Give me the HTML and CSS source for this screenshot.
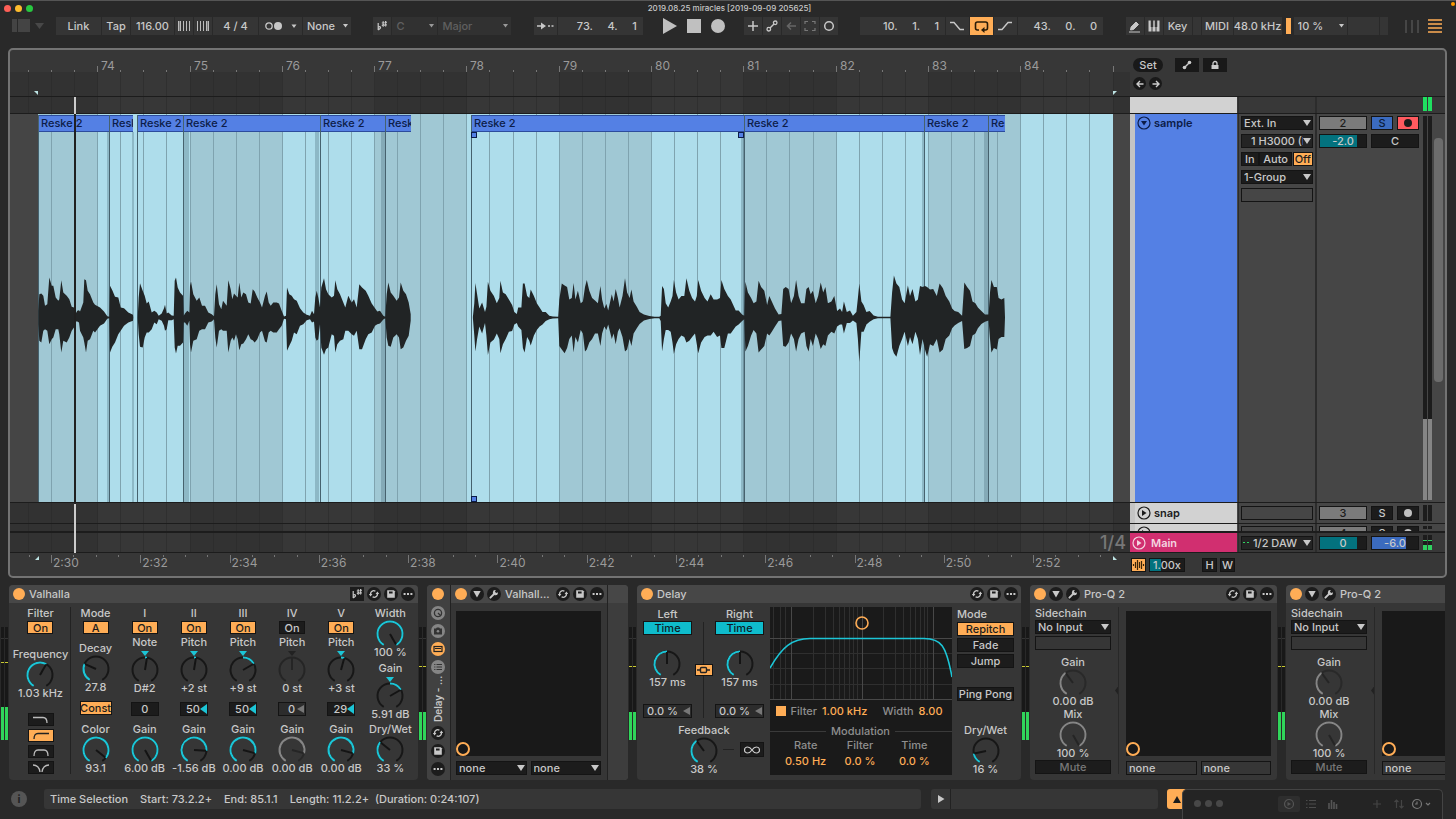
FILE: index.html
```html
<!DOCTYPE html>
<html lang="en">
<head>
    <meta charset="UTF-8">
    <title>2019.08.25 miracles</title>
    <link rel="stylesheet" href="styles.css">
</head>
<body>
    <svg class="symbols" aria-hidden="true">
        <symbol id="i-swap" viewBox="0 0 14 14"><path d="M3.6 7.6V6.8A3 3 0 0 1 8.4 4.3M10.4 6.4v.8A3 3 0 0 1 5.6 9.7" fill="none" stroke="currentColor" stroke-width="1.4"/><path d="M1.8 7h3.6L3.6 9.4zM8.6 7h3.6l-1.8-2.4z" fill="currentColor"/></symbol>
        <symbol id="i-save" viewBox="0 0 14 14"><path d="M3.2 3.2h6.600l1 1v6.600H3.200z" fill="currentColor"/><path d="M5 4.5h3.6v2H5z" fill="#1c1c1c"/></symbol>
        <symbol id="i-dots" viewBox="0 0 14 14"><path d="M2.6 6h2v2h-2zM6 6h2v2H6zM9.400 6h2v2h-2z" fill="currentColor"/></symbol>
        <symbol id="i-down" viewBox="0 0 14 14"><path d="M3.3 4h7.4L7 10.6z" fill="currentColor"/></symbol>
        <symbol id="i-wrench" viewBox="0 0 14 14"><path d="M3.4 10.6l4-4" stroke="currentColor" stroke-width="2" stroke-linecap="round"/><path d="M10.8 5.2a2.5 2.5 0 1 1-2-2L7.9 4.7l1.4 1.4z" fill="currentColor"/></symbol>
        <symbol id="i-scale" viewBox="0 0 14 14"><path d="M3.2 4v7M3.2 8.2c2-1.4 3 .2 1.8 1.3L3.2 11M8.2 2.3v5.4M10.6 2v5.4M6.8 4l5-.6M6.8 6.4l5-.6" fill="none" stroke="currentColor" stroke-width="1.200"/></symbol>
        <symbol id="i-macro" viewBox="0 0 14 14"><circle cx="7" cy="7" r="3.6" fill="none" stroke="#333" stroke-width="1.3"/><path d="M7 7l3 3" stroke="#333" stroke-width="1.3"/></symbol>
        <symbol id="i-camera" viewBox="0 0 14 14"><path d="M3 4.5h2l.8-1h2.4l.8 1h2v6H3z" fill="#333"/><circle cx="7" cy="7.3" r="1.3" fill="#888"/></symbol>
        <symbol id="i-device" viewBox="0 0 14 14"><rect x="3" y="4.5" width="8" height="5" fill="none" stroke="#222" stroke-width="1.2"/><path d="M4 6.5h6" stroke="#222"/></symbol>
        <symbol id="i-list" viewBox="0 0 14 14"><path d="M3.2 4.5h1.2M3.2 7h1.2M3.2 9.5h1.2M5.5 4.5H11M5.5 7H11M5.5 9.5H11" stroke="#333" stroke-width="1.2"/></symbol>
    </svg>

    <header class="title-bar">
        <span class="lights"><i class="close"></i><i class="minimise"></i><i class="zoom"></i></span>
        <h1>2019.08.25 miracles [2019-09-09 205625]</h1>
        <i class="mic-dot"></i>
    </header>

    <nav class="toolbar">
        <div class="group">
            <button class="bare panel-toggle" aria-label="Browser"><svg width="30" height="14"><path d="M0 0h5v13H0zM6 0h12v13H6z" fill="#444"/><path d="M23 4h9l-4.500 6z" fill="#484848"/></svg></button>
            <button class="tb w45">Link</button>
            <button class="tb w28">Tap</button>
            <input class="tb w43" aria-label="Tempo" value="116.00">
            <button class="tb w18" aria-label="Nudge down"><svg width="14" height="12"><path d="M1.500 1v10M3.500 1v10M6.500 1v10M9.500 1v10M12.500 1v10" stroke="#bbb"/><path d="M1 6h3" stroke="#bbb" stroke-width="10" opacity=".5"/></svg></button>
            <button class="tb w18" aria-label="Nudge up"><svg width="14" height="12"><path d="M1.500 1v10M4.500 1v10M7.500 1v10M10.500 1v10M12.500 1v10" stroke="#bbb"/><path d="M10 6h3" stroke="#bbb" stroke-width="10" opacity=".5"/></svg></button>
            <input class="tb w45" aria-label="Time signature" value="4 / 4">
            <button class="tb w43" aria-label="Metronome"><svg width="34" height="12"><circle cx="5" cy="6" r="3.200" fill="none" stroke="#c8c8c8" stroke-width="1.300"/><circle cx="14" cy="6" r="4" fill="#c8c8c8"/><path d="M27.500 4.500h5L30 8z" fill="#c8c8c8"/></svg></button>
            <select class="tb w48 small-arrow" aria-label="Quantisation"><option>None</option></select>
        </div>
        <div class="group">
            <button class="tb w18" aria-label="Scale mode"><svg class="icon"><use href="#i-scale"/></svg></button>
            <select class="tb w45 small-arrow dim" aria-label="Root note"><option>C</option></select>
            <select class="tb w73 small-arrow dim" aria-label="Scale"><option>Major</option></select>
        </div>
        <div class="group">
            <button class="tb w23" aria-label="Follow"><svg width="18" height="10"><path d="M1 5h5M12 5h2M15.500 5h2" stroke="#c8c8c8" stroke-width="1.500"/><path d="M5 1.500L10 5 5 8.500z" fill="#c8c8c8"/></svg></button>
            <input class="tb w85 position" aria-label="Arrangement position" value="73.     4.     1">
            <div class="transport">
                <button class="bare" aria-label="Play"><svg width="14" height="16"><path d="M0 0l14 8-14 8z" fill="#c0c0c0"/></svg></button>
                <button class="bare" aria-label="Stop"><svg width="14" height="14"><path d="M0 0h14v14H0z" fill="#c0c0c0"/></svg></button>
                <button class="bare" aria-label="Record"><svg width="14" height="14"><circle cx="7" cy="7" r="7" fill="#c0c0c0"/></svg></button>
            </div>
            <button class="tb w18" aria-label="Overdub"><svg width="12" height="12"><path d="M6 1v10M1 6h10" stroke="#c8c8c8" stroke-width="1.500"/></svg></button>
            <button class="tb w18" aria-label="Automation arm"><svg width="12" height="12"><path d="M4 8l4-4" stroke="#c8c8c8" stroke-width="1.400"/><circle cx="2.800" cy="9.200" r="1.800" fill="none" stroke="#c8c8c8" stroke-width="1.300"/><circle cx="9.200" cy="2.800" r="1.800" fill="none" stroke="#c8c8c8" stroke-width="1.300"/></svg></button>
            <button class="tb w18" aria-label="Re-enable automation"><svg width="12" height="12"><path d="M11 6H3M6 2.500L2.500 6 6 9.500" fill="none" stroke="#666" stroke-width="1.600"/></svg></button>
            <button class="tb w18" aria-label="Capture MIDI"><svg width="12" height="12"><path d="M1 4V1.500h3M8 1.500h3V4M11 8v2.500H8M4 10.500H1V8" fill="none" stroke="#777" stroke-width="1.200"/></svg></button>
            <button class="tb w18" aria-label="Session record"><svg width="12" height="12"><circle cx="6" cy="6" r="4.300" fill="none" stroke="#c8c8c8" stroke-width="1.500"/></svg></button>
        </div>
        <div class="group">
            <input class="tb w85 position" aria-label="Loop start" value="10.     1.     1">
            <button class="tb w23" aria-label="Punch in"><svg width="15" height="10"><path d="M0 1.500h4l6 7h4" fill="none" stroke="#c8c8c8" stroke-width="1.400"/></svg></button>
            <button class="tb w23 on" aria-label="Loop"><svg width="16" height="13"><path d="M5 10H3.500Q1.500 10 1.500 8V4Q1.500 2 3.500 2h8Q13.500 2 13.500 4v4Q13.500 10 11.500 10H9" fill="none" stroke="#2a1c08" stroke-width="1.600"/><path d="M10.500 7v6L7 10z" fill="#2a1c08"/></svg></button>
            <button class="tb w23" aria-label="Punch out"><svg width="15" height="10"><path d="M0 8.500h4l6-7h4" fill="none" stroke="#c8c8c8" stroke-width="1.400"/></svg></button>
            <input class="tb w85 position" aria-label="Loop length" value="43.     0.     0">
        </div>
        <div class="group">
            <button class="tb w18" aria-label="Draw mode"><svg width="13" height="13"><path d="M2.500 10l.6-3L8 2l2.500 2.500-5 5zM1 12h11" fill="#c8c8c8" stroke="#c8c8c8"/></svg></button>
            <button class="tb w18" aria-label="Computer MIDI keyboard"><svg width="12" height="12"><path d="M.5.5h11v11H.5z" fill="#c8c8c8"/><path d="M4 0v12M8 0v12" stroke="#353535"/><path d="M4 0v7M8 0v7" stroke="#353535" stroke-width="2.500"/></svg></button>
            <button class="tb w28">Key</button>
            <span class="tb w8"></span>
            <button class="tb w30">MIDI</button>
            <button class="tb w48">48.0 kHz</button>
            <i class="cpu-bar"></i>
            <select class="tb w53 small-arrow" aria-label="CPU load"><option>10 %</option></select>
            <span class="tb w30"></span>
            <span class="tb w8"></span>
        </div>
        <div class="group views">
            <button class="bare" aria-label="Session view"><svg width="14" height="13"><path d="M1 0v13M7 0v13M13 0v13" stroke="#505050" stroke-width="1.500"/></svg></button>
            <button class="bare" aria-label="Arrangement view"><svg width="14" height="14"><path d="M0 1h14M0 5h14M0 9h14M0 13h14" stroke="#ffad56" stroke-width="1.700"/></svg></button>
        </div>
    </nav>

    <main class="arrangement">
        <section class="timeline">
            <div class="ruler bar-ruler"><div class="grid"></div><div class="labels"></div></div>
            <div class="lane overview"><div class="grid"></div></div>
            <div class="lane track-lane">
                <div class="selection"></div>
                <div class="clips"></div>
                <svg class="waveform" viewBox="0 0 1120 370" preserveAspectRatio="none"><path/></svg>
            </div>
            <div class="lane snap-lane"><div class="grid"></div></div>
            <div class="lane cut-lane"><div class="grid"></div></div>
            <div class="lane main-lane"><div class="grid"></div><span class="grid-size">1/4</span></div>
            <div class="ruler time-ruler"><div class="labels"></div></div>
            <div class="playhead"></div>
        </section>

        <section class="tracks">
            <div class="track-tools">
                <div class="tool-row">
                    <button class="pill">Set</button>
                    <button class="tool" aria-label="Automation"><svg width="10" height="10"><path d="M2 8l6-6" stroke="#ccc" stroke-width="1.500"/><circle cx="2.500" cy="7.500" r="1.800" fill="#ccc"/><circle cx="7.500" cy="2.500" r="1.800" fill="#ccc"/></svg></button>
                    <button class="tool" aria-label="Lock envelopes"><svg width="10" height="10"><path d="M1.500 5h7v4h-7z" fill="#ccc"/><path d="M3 5V3.500a2 2 0 0 1 4 0V5" fill="none" stroke="#ccc" stroke-width="1.300"/></svg></button>
                </div>
                <div class="tool-row arrows">
                    <button class="round" aria-label="Previous locator"><svg width="8" height="8"><path d="M7.500 4h-6M4 1L1 4l3 3" fill="none" stroke="#ccc" stroke-width="1.400"/></svg></button>
                    <button class="round" aria-label="Next locator"><svg width="8" height="8"><path d="M.5 4h6M4 1l3 3-3 3" fill="none" stroke="#ccc" stroke-width="1.400"/></svg></button>
                </div>
            </div>
            <div class="track overview">
                <div class="name light"></div>
                <div class="io"></div>
                <div class="mixer"></div>
                <div class="level clip-level"><i></i><i></i></div>
            </div>
            <div class="track sample">
                <div class="name blue"><svg class="fold" viewBox="0 0 14 14"><circle cx="7" cy="7" r="6" fill="none" stroke="currentColor" stroke-width="1.200"/><path d="M4 5h6L7 9.500z" fill="currentColor"/></svg>sample</div>
                <div class="io">
                    <select class="box" aria-label="Input type"><option>Ext. In</option></select>
                    <select class="box channel" aria-label="Input channel"><option>1 H3000 (L)</option></select>
                    <div class="monitor"><button class="box">In</button><button class="box">Auto</button><button class="box on">Off</button></div>
                    <select class="box" aria-label="Output type"><option>1-Group</option></select>
                    <div class="box empty"></div>
                </div>
                <div class="mixer">
                    <button class="box number wide">2</button><button class="box solo">S</button><button class="box arm" aria-label="Arm"><i class="dot"></i></button>
                    <input class="box wide volume" aria-label="Volume" value="-2.0"><input class="box wide" aria-label="Pan" value="C">
                </div>
                <div class="level"><i></i><i></i></div>
                <div class="scrollbar"></div>
            </div>
            <div class="track snap">
                <div class="name light"><svg class="fold" viewBox="0 0 14 14"><circle cx="7" cy="7" r="6" fill="none" stroke="currentColor" stroke-width="1.200"/><path d="M5 4v6l4.500-3z" fill="currentColor"/></svg>snap</div>
                <div class="io"><div class="box empty"></div></div>
                <div class="mixer"><button class="box number wide">3</button><button class="box">S</button><button class="box" aria-label="Arm"><i class="dot grey"></i></button></div>
                <div class="level"><i></i><i></i></div>
            </div>
            <div class="track cut">
                <div class="name light"><svg class="fold" viewBox="0 0 14 14"><circle cx="7" cy="7" r="6" fill="none" stroke="currentColor" stroke-width="1.200"/><path d="M5 4v6l4.500-3z" fill="currentColor"/></svg>snap</div>
                <div class="io"><div class="box empty"></div></div>
                <div class="mixer"><button class="box number wide">4</button><button class="box">S</button><button class="box" aria-label="Arm"><i class="dot grey"></i></button></div>
                <div class="level"><i></i><i></i></div>
            </div>
            <div class="track main">
                <div class="name pink"><svg class="fold" viewBox="0 0 14 14"><circle cx="7" cy="7" r="6" fill="none" stroke="currentColor" stroke-width="1.200"/><path d="M5 4v6l4.500-3z" fill="currentColor"/></svg>Main</div>
                <div class="io"><select class="box output" aria-label="Main output"><option>1/2 DAW</option></select></div>
                <div class="mixer"><input class="box wide volume" aria-label="Main volume" value="0"><input class="box wide cue" aria-label="Cue volume" value="-6.0"></div>
                <div class="level main-level"><i></i><i></i></div>
            </div>
            <div class="track-foot">
                <button class="box on wave" aria-label="Optimise height"><svg width="13" height="12"><path d="M1.500 5v2M3.500 3v6M5.500 1v10M7.500 3v6M9.500 2v8M11.500 5v2" stroke="#3a2408" stroke-width="1.200"/></svg></button>
                <input class="box speed" aria-label="Playback speed" value="1.00x">
                <button class="box h">H</button>
                <button class="box">W</button>
            </div>
        </section>
    </main>

    <section class="chain">
        <div class="meter left-meter"></div>

        <article class="device valhalla">
            <header><button class="power" aria-label="Valhalla on"></button><h2>Valhalla</h2>
                <button class="chip square" aria-label="Scale"><svg class="icon"><use href="#i-scale"/></svg></button>
                <button class="chip" aria-label="Swap"><svg class="icon"><use href="#i-swap"/></svg></button>
                <button class="chip" aria-label="Save"><svg class="icon"><use href="#i-save"/></svg></button>
                <button class="chip" aria-label="More"><svg class="icon"><use href="#i-dots"/></svg></button>
            </header>
            <div class="body">
                <div class="col filter-col">
                    <div class="stack"><span>Filter</span><button class="box on w26">On</button></div>
                    <label class="knob"><span>Frequency</span><input type="range" value="60"><b>1.03 kHz</b></label>
                    <div class="stack shapes">
                        <button class="box w26" aria-label="Low-pass"><svg width="16" height="8"><path d="M0 1.500h10q4 0 4 5.500" fill="none" stroke="#bbb" stroke-width="1.300"/></svg></button>
                        <button class="box on w26" aria-label="High-pass"><svg width="16" height="8"><path d="M1 7q0-5.500 4-5.500h11" fill="none" stroke="#222" stroke-width="1.300"/></svg></button>
                        <button class="box w26" aria-label="Band-pass"><svg width="16" height="8"><path d="M1 8q0-6 4-6h6q4 0 4 6" fill="none" stroke="#bbb" stroke-width="1.300"/></svg></button>
                        <button class="box w26" aria-label="Notch"><svg width="16" height="8"><path d="M0 1q6 0 7 7M16 1q-6 0-7 7" fill="none" stroke="#bbb" stroke-width="1.300"/></svg></button>
                    </div>
                </div>
                <div class="col">
                    <div class="stack"><span>Mode</span><button class="box on w26">A</button></div>
                    <label class="knob"><span>Decay</span><input type="range" value="28"><b>27.8</b></label>
                    <button class="box on w32">Const</button>
                    <label class="knob"><span>Color</span><input type="range" value="93"><b>93.1</b></label>
                </div>
                <div class="col">
                    <div class="stack"><span>I</span><button class="box on w26">On</button>
                        <label class="knob bipolar"><span>Note</span><input type="range" value="53"><b>D#2</b></label></div>
                    <input class="box w28 amount" aria-label="Fine I" value="0">
                    <label class="knob"><span>Gain</span><input type="range" value="100"><b>6.00 dB</b></label>
                </div>
                <div class="col">
                    <div class="stack"><span>II</span><button class="box on w26">On</button>
                        <label class="knob bipolar"><span>Pitch</span><input type="range" value="53"><b>+2 st</b></label></div>
                    <input class="box w28 amount mod" aria-label="Fine II" value="50">
                    <label class="knob"><span>Gain</span><input type="range" value="81"><b>-1.56 dB</b></label>
                </div>
                <div class="col">
                    <div class="stack"><span>III</span><button class="box on w26">On</button>
                        <label class="knob bipolar"><span>Pitch</span><input type="range" value="70"><b>+9 st</b></label></div>
                    <input class="box w28 amount mod" aria-label="Fine III" value="50">
                    <label class="knob"><span>Gain</span><input type="range" value="85"><b>0.00 dB</b></label>
                </div>
                <div class="col">
                    <div class="stack"><span>IV</span><button class="box w26">On</button>
                        <label class="knob bipolar faint"><span>Pitch</span><input type="range" value="50"><b>0 st</b></label></div>
                    <input class="box w28 amount mod inactive" aria-label="Fine IV" value="0">
                    <label class="knob grey"><span>Gain</span><input type="range" value="85"><b>0.00 dB</b></label>
                </div>
                <div class="col">
                    <div class="stack"><span>V</span><button class="box on w26">On</button>
                        <label class="knob bipolar"><span>Pitch</span><input type="range" value="55"><b>+3 st</b></label></div>
                    <input class="box w28 amount mod" aria-label="Fine V" value="29">
                    <label class="knob"><span>Gain</span><input type="range" value="85"><b>0.00 dB</b></label>
                </div>
                <div class="col">
                    <label class="knob"><span>Width</span><input type="range" value="100"><b>100 %</b></label>
                    <label class="knob bipolar"><span>Gain</span><input type="range" value="70"><b>5.91 dB</b></label>
                    <label class="knob"><span>Dry/Wet</span><input type="range" value="33"><b>33 %</b></label>
                </div>
            </div>
        </article>

        <div class="meter"></div>

        <article class="device rack">
            <div class="rack-strip">
                <button class="power" aria-label="Rack on"></button>
                <button class="chip pale" aria-label="Macros"><svg class="icon"><use href="#i-macro"/></svg></button>
                <button class="chip pale" aria-label="Variations"><svg class="icon"><use href="#i-camera"/></svg></button>
                <button class="chip lit" aria-label="Devices"><svg class="icon"><use href="#i-device"/></svg></button>
                <button class="chip pale" aria-label="Chains"><svg class="icon"><use href="#i-list"/></svg></button>
                <h2>Delay - ...</h2>
                <button class="chip" aria-label="Swap"><svg class="icon"><use href="#i-swap"/></svg></button>
                <button class="chip" aria-label="Save"><svg class="icon"><use href="#i-save"/></svg></button>
                <button class="chip" aria-label="More"><svg class="icon"><use href="#i-dots"/></svg></button>
            </div>
            <div class="rack-main">
                <header><button class="power" aria-label="Plug-in on"></button>
                    <button class="chip" aria-label="Unfold"><svg class="icon"><use href="#i-down"/></svg></button>
                    <button class="chip" aria-label="Plug-in window"><svg class="icon"><use href="#i-wrench"/></svg></button>
                    <h2>Valhall...</h2>
                    <button class="chip" aria-label="Swap"><svg class="icon"><use href="#i-swap"/></svg></button>
                    <button class="chip" aria-label="Save"><svg class="icon"><use href="#i-save"/></svg></button>
                    <button class="chip" aria-label="More"><svg class="icon"><use href="#i-dots"/></svg></button>
                </header>
                <div class="xy-wrap">
                    <div class="xy"><i class="ring"></i></div>
                    <div class="xy-selects">
                        <select class="box" aria-label="X parameter"><option>none</option></select>
                        <select class="box" aria-label="Y parameter"><option>none</option></select>
                    </div>
                </div>
            </div>
            <div class="rack-end"></div>
        </article>

        <div class="meter"></div>

        <article class="device delay">
            <header><button class="power" aria-label="Delay on"></button><h2>Delay</h2>
                <button class="chip" aria-label="Swap"><svg class="icon"><use href="#i-swap"/></svg></button>
                <button class="chip" aria-label="Save"><svg class="icon"><use href="#i-save"/></svg></button>
                <button class="chip" aria-label="More"><svg class="icon"><use href="#i-dots"/></svg></button>
            </header>
            <div class="body">
                <div class="times">
                    <div class="channels">
                        <div class="side">
                            <span>Left</span><button class="box cyan">Time</button>
                            <label class="knob"><span class="hidden">Left time</span><input type="range" value="50"><b>157 ms</b></label>
                            <input class="box offset" aria-label="Left offset" value="0.0 %">
                        </div>
                        <div class="link-line"><button class="box on" aria-label="Link"><svg width="13" height="8"><path d="M0 4h4M9 4h4" stroke="#222" stroke-width="1.300"/><rect x="3.500" y="1.500" width="6" height="5" rx="1" fill="none" stroke="#222" stroke-width="1.400"/></svg></button></div>
                        <div class="side">
                            <span>Right</span><button class="box cyan">Time</button>
                            <label class="knob"><span class="hidden">Right time</span><input type="range" value="50"><b>157 ms</b></label>
                            <input class="box offset" aria-label="Right offset" value="0.0 %">
                        </div>
                    </div>
                    <div class="feedback">
                        <label class="knob"><span>Feedback</span><input type="range" value="38"><b>38 %</b></label>
                        <i class="dash"></i>
                        <button class="box freeze" aria-label="Freeze"><svg width="16" height="8"><path d="M8 4C6 1 4.500 1 3.500 1a3 3 0 0 0 0 6C4.500 7 6 7 8 4s3.500-3 4.500-3a3 3 0 0 1 0 6C11.500 7 10 7 8 4z" fill="none" stroke="#ccc" stroke-width="1.200"/></svg></button>
                    </div>
                </div>
                <div class="display">
                    <svg class="curve" viewBox="0 0 182 94" preserveAspectRatio="none">
                        <path d="M3.500 0v93M10.500 0v93M15.500 0v93M43.500 0v93M55.500 0v93M63.500 0v93M69.500 0v93M74.500 0v93M79.500 0v93M83.500 0v93M87.500 0v93M113.500 0v93M125.500 0v93M133.500 0v93M140.500 0v93M145.500 0v93M150.500 0v93M154.500 0v93M157.500 0v93M0 46.500h182M0 61.500h182M0 77.500h182" stroke="#2f2f2f"/>
                        <path d="M21.500 0v93M92.500 0v93M163.500 0v93M0 31.500h182M0 92.500h182" stroke="#484848"/>
                        <path d="M0 61C12 40 22 31.500 40 31.500H154C171 31.500 176 38 182 70" fill="none" stroke="#1cc5d6" stroke-width="1.600"/>
                        <circle cx="92" cy="16" r="6" fill="none" stroke="#ffad56" stroke-width="1.600"/>
                    </svg>
                    <div class="readout"><label><input type="checkbox" checked> Filter</label><b>1.00 kHz</b><span class="push">Width</span><b>8.00</b></div>
                    <div class="rule"><span>Modulation</span></div>
                    <dl><div><dt>Rate</dt><dd>0.50 Hz</dd></div><div><dt>Filter</dt><dd>0.0 %</dd></div><div><dt>Time</dt><dd>0.0 %</dd></div></dl>
                </div>
                <div class="modes">
                    <span>Mode</span>
                    <button class="box on">Repitch</button>
                    <button class="box">Fade</button>
                    <button class="box">Jump</button>
                    <button class="box ping">Ping Pong</button>
                    <label class="knob"><span>Dry/Wet</span><input type="range" value="16"><b>16 %</b></label>
                </div>
            </div>
        </article>

        <div class="meter"></div>

        <article class="device proq">
            <header><button class="power" aria-label="Pro-Q 2 on"></button>
                <button class="chip" aria-label="Unfold"><svg class="icon"><use href="#i-down"/></svg></button>
                <button class="chip" aria-label="Plug-in window"><svg class="icon"><use href="#i-wrench"/></svg></button>
                <h2>Pro-Q 2</h2>
                <button class="chip" aria-label="Swap"><svg class="icon"><use href="#i-swap"/></svg></button>
                <button class="chip" aria-label="Save"><svg class="icon"><use href="#i-save"/></svg></button>
                <button class="chip" aria-label="More"><svg class="icon"><use href="#i-dots"/></svg></button>
            </header>
            <div class="body">
                <div class="sidechain">
                    <label for="sc1">Sidechain</label>
                    <select class="box" id="sc1"><option>No Input</option></select>
                    <div class="box empty"></div>
                    <label class="knob grey"><span>Gain</span><input type="range" value="38"><b>0.00 dB</b></label>
                    <label class="knob grey"><span>Mix</span><input type="range" value="100"><b>100 %</b></label>
                    <button class="box mute">Mute</button>
                </div>
                <div class="splitter"><i></i></div>
                <div class="xy-wrap">
                    <div class="xy"><i class="ring"></i></div>
                    <div class="xy-selects"><button class="box empty">none</button><button class="box empty">none</button></div>
                </div>
            </div>
        </article>

        <div class="meter"></div>

        <article class="device proq">
            <header><button class="power" aria-label="Pro-Q 2 on"></button>
                <button class="chip" aria-label="Unfold"><svg class="icon"><use href="#i-down"/></svg></button>
                <button class="chip" aria-label="Plug-in window"><svg class="icon"><use href="#i-wrench"/></svg></button>
                <h2>Pro-Q 2</h2>
            </header>
            <div class="body">
                <div class="sidechain">
                    <label for="sc2">Sidechain</label>
                    <select class="box" id="sc2"><option>No Input</option></select>
                    <div class="box empty"></div>
                    <label class="knob grey"><span>Gain</span><input type="range" value="38"><b>0.00 dB</b></label>
                    <label class="knob grey"><span>Mix</span><input type="range" value="100"><b>100 %</b></label>
                    <button class="box mute">Mute</button>
                </div>
                <div class="splitter"><i></i></div>
                <div class="xy-wrap">
                    <div class="xy"><i class="ring"></i></div>
                    <div class="xy-selects"><button class="box empty">none</button><button class="box empty"></button></div>
                </div>
            </div>
        </article>
    </section>

    <footer class="status-bar">
        <button class="info" aria-label="Info view">i</button>
        <p class="status-text"><span>Time Selection</span><span>Start: 73.2.2+</span><span>End: 85.1.1</span><span>Length: 11.2.2+&nbsp; (Duration: 0:24:107)</span></p>
        <div class="status-clip"><button class="bare" aria-label="Show clip view"><svg width="8" height="8"><path d="M1 0l6.500 4L1 8z" fill="#c8c8c8"/></svg></button></div>
        <button class="status-up" aria-label="Show device view"><svg width="8" height="7"><path d="M4 0l4 7H0z" fill="#1c1c1c"/></svg></button>
    </footer>

    <aside class="mini-window">
        <span class="mini-lights"><i></i><i></i><i></i></span>
        <button class="mini active" aria-label="Live"><svg width="12" height="12"><circle cx="6" cy="6" r="4.500" fill="none" stroke="#555" stroke-width="1.200"/><path d="M4.500 4l3.500 2-3.500 2z" fill="#555"/></svg></button>
        <button class="mini" aria-label="List"><svg width="12" height="12"><path d="M1 2.500h1.500M1 6h1.500M1 9.500h1.500M4 2.500h7M4 6h7M4 9.500h7" stroke="#4c4c4c" stroke-width="1.200"/></svg></button>
        <button class="mini" aria-label="Levels"><svg width="12" height="12"><path d="M2 5v6M4.500 2v9M7 4v7M9.500 6v5" stroke="#555" stroke-width="1.600"/></svg></button>
        <button class="mini push" aria-label="Add"><svg width="12" height="12"><path d="M6 2v8M2 6h8" stroke="#444" stroke-width="1.200"/></svg></button>
        <button class="mini" aria-label="Sort"><svg width="12" height="12"><path d="M3.500 10V2M1.500 4l2-2 2 2M8.500 2v8M6.500 8l2 2 2-2" fill="none" stroke="#444" stroke-width="1.200"/></svg></button>
        <button class="mini" aria-label="History"><svg width="20" height="12"><circle cx="6" cy="6" r="4.500" fill="none" stroke="#777" stroke-width="1.200"/><path d="M6 3.500V6H4M15 5l2 2 2-2" fill="none" stroke="#777" stroke-width="1.200"/></svg></button>
    </aside>

    <script src="script.js"></script>
</body>
</html>
```

FILE: styles.css
```css
* {
    margin: 0;
    padding: 0;
    box-sizing: border-box;
}

body {
    height: 100vh;
    display: flex;
    flex-direction: column;
    overflow: hidden;
    background-color: #292929;
    color: #c8c8c8;
    font-family: Inter, "Liberation Sans", sans-serif;
    font-size: 11px;
    font-weight: 500;
    line-height: 12px;
    border-top: 1px solid #555;
}

button, input, select {
    font: inherit;
    color: inherit;
    border: none;
    border-radius: 0;
    background: none;
    appearance: none;
    outline: none;
    min-width: 0;
}

button {
    display: flex;
    align-items: center;
    justify-content: center;
    flex-shrink: 0;
    white-space: nowrap;
}

input {
    text-align: center;
}

svg {
    display: block;
}

h1, h2, b, dd {
    font-size: inherit;
    font-weight: inherit;
}

.symbols {
    position: absolute;
    width: 0;
    height: 0;
}

.icon {
    width: 14px;
    height: 14px;
}

.hidden {
    visibility: hidden;
}

.push {
    margin-left: auto;
}

/* Title bar */

.title-bar {
    height: 16px;
    display: grid;
    grid-template-columns: 1fr auto 1fr;
    align-items: center;
    padding: 0 1px 2px 4px;
}

.title-bar h1 {
    font-size: 8px;
    font-weight: 500;
}

.lights {
    display: flex;
    gap: 4px;
}

.lights i {
    width: 7px;
    height: 7px;
    border-radius: 50%;
}

.close { background-color: #ff5f57; }
.minimise { background-color: #febc2e; }
.zoom { background-color: #28c840; }

.mic-dot {
    width: 4px;
    height: 4px;
    border-radius: 50%;
    background-color: #f90;
    align-self: start;
    justify-self: end;
    margin-top: 1px;
}

/* Toolbar */

.toolbar {
    display: flex;
    justify-content: space-between;
    padding: 0 14px 0 12px;
    height: 31px;
    flex-shrink: 0;
}

.group {
    display: flex;
    align-items: center;
    gap: 1px;
    height: 18px;
}

.group.views {
    gap: 9px;
    margin-left: -5px;
}

.tb {
    height: 18px;
    background-color: #353535;
    flex-shrink: 0;
}

.panel-toggle {
    width: 43px;
    justify-content: flex-start;
}

.panel-toggle svg {
    width: 34px;
}

.w8 { width: 8px; }
.w18 { width: 18px; }
.w23 { width: 23px; }
.w26 { width: 26px; }
.w28 { width: 28px; }
.w30 { width: 31px; }
.w32 { width: 32px; }
.w43 { width: 43px; }
.w45 { width: 45px; }
.w48 { width: 48px; }
.w53 { width: 53px; }
.w73 { width: 73px; }
.w85 { width: 85px; }

.small-arrow {
    padding-left: 4px;
    background-image: url('data:image/svg+xml,<svg xmlns="http://www.w3.org/2000/svg" width="5" height="4"><path d="M0 0h5L2.5 3.500z" fill="%23c8c8c8"/></svg>');
    background-repeat: no-repeat;
    background-position: right 3px center;
}

.dim {
    color: #777;
    opacity: .7;
}

.position {
    white-space: pre;
    text-align: right;
    padding-right: 6px;
}

.transport {
    display: flex;
    align-items: center;
    gap: 10px;
    padding: 0 18px 0 19px;
}

.cpu-bar {
    width: 5px;
    height: 16px;
    margin: 0 2px 0 3px;
    background-color: #ffad56;
}

.on {
    background-color: #ffad56 !important;
    color: #1c1c1c;
}

/* Arrangement */

.arrangement {
    flex: 1;
    min-height: 0;
    display: flex;
    margin: 0 9px 0 8px;
    border: 2px solid #737373;
    border-radius: 5px;
    background-color: #373737;
    overflow: hidden;
}

.timeline {
    flex: 1;
    min-width: 0;
    position: relative;
    display: flex;
    flex-direction: column;
    overflow: hidden;
}

.bar-ruler {
    height: 46px;
    padding-top: 22px;
    position: relative;
}

.lane {
    position: relative;
    border-bottom: 1px solid #1c1c1c;
}

.overview { height: 18px; }

.timeline .overview {
    border-top: 1px solid #1c1c1c;
}

.track-lane {
    flex: 1;
    background-color: #454545;
}

.snap-lane { height: 21px; }
.cut-lane { height: 9px; border-bottom-width: 2px; }
.main-lane { height: 20px; }

.time-ruler {
    height: 23px;
    position: relative;
}

.grid, .grid svg {
    width: 100%;
    height: 100%;
    display: block;
}

.grid .odd { fill: #323232; }
.grid .even { fill: #373737; }
.grid line { stroke: #2a2a2a; }

.labels span {
    position: absolute;
    padding-left: 4px;
    color: #9a9a9a;
    font-size: 12px;
    font-weight: 400;
}

.bar-ruler .labels span { top: 10px; }
.time-ruler .labels span { top: 4px; padding-left: 2px; }

.labels i {
    position: absolute;
    width: 1px;
    height: 6px;
    background-color: #777;
    top: 16px;
}

.labels i.minor {
    height: 2px;
    top: 20px;
}

.time-ruler .labels i { top: 2px; height: 8px; }
.time-ruler .labels i.minor { height: 2px; }

.labels i.marker {
    width: 4px;
    height: 4px;
    background-color: #bde4e4;
    top: 41px;
    clip-path: polygon(0 0, 100% 0, 100% 100%);
}

.labels i.marker.end {
    clip-path: polygon(0 0, 100% 0, 0 100%);
}

.time-ruler .labels i.marker { top: 3px; height: 4px; clip-path: polygon(100% 0, 100% 100%, 0 100%); }
.time-ruler .labels i.marker.end { clip-path: polygon(0 0, 100% 100%, 0 100%); }

.selection, .clips, .waveform {
    position: absolute;
    inset: 0;
    width: 100%;
    height: 100%;
}

.selection svg {
    width: 100%;
    height: 100%;
}

.selection .odd { fill: #a0c8d4; }
.selection .even { fill: #aeddeb; }
.selection line { stroke: #7fa3af; }

.waveform {
    top: 18px;
    height: calc(100% - 18px);
    fill: #212425;
}

.clip {
    position: absolute;
    top: 1px;
    bottom: 0;
    border-left: 1px solid #46626e;
}

.clip-title {
    display: block;
    height: 17px;
    overflow: hidden;
    padding-left: 2px;
    line-height: 15px;
    background-color: #5480e4;
    border-top: 1px solid #2c4c9c;
    border-bottom: 1px solid #2c4c9c;
    color: #0c1c48;
    white-space: nowrap;
}

.fade {
    position: absolute;
    top: 18px;
    bottom: 0;
    background-color: rgba(80, 115, 130, .35);
}

.handle {
    position: absolute;
    width: 6px;
    height: 6px;
    background-color: #5480e4;
    border: 1px solid #0c1c48;
}

.handle.top { top: 18px; }
.handle.bottom { bottom: 0; }

.playhead {
    position: absolute;
    left: 5.7%;
    top: 47px;
    bottom: 23px;
    width: 2px;
    background-image: linear-gradient(#ccc 17px, #202020 17px, #202020 calc(100% - 49px), #ccc calc(100% - 49px));
}

.grid-size {
    position: absolute;
    right: 4px;
    top: 0;
    font-size: 18px;
    line-height: 20px;
    color: #777;
}

/* Track headers */

.tracks {
    width: 315px;
    flex-shrink: 0;
    display: flex;
    flex-direction: column;
}

.track-tools {
    height: 46px;
    padding: 8px 0 0 3px;
    display: flex;
    flex-direction: column;
    gap: 5px;
}

.tool-row {
    display: flex;
    gap: 4px;
}

.arrows { gap: 3px; }

.pill, .tool, .round {
    height: 14px;
    background-color: #191919;
}

.pill {
    width: 30px;
    border-radius: 7px;
    margin-right: 8px;
}

.tool { width: 24px; }

.round {
    width: 13px;
    height: 13px;
    border-radius: 50%;
}

.track {
    display: flex;
    background-color: #464646;
    border-bottom: 1px solid #1c1c1c;
    position: relative;
}

.track.overview {
    background-color: #383838;
    border-top: 1px solid #1c1c1c;
}

.track.sample { flex: 1; }
.track.snap { height: 21px; }
.track.cut { height: 9px; overflow: hidden; border-bottom-width: 2px; }
.track.main { height: 20px; background-color: #383838; }

.name {
    width: 107px;
    display: flex;
    align-items: flex-start;
    gap: 3px;
    padding: 2px 0 0 2px;
    border-left: 5px solid #c4c4c4;
    line-height: 15px;
    font-weight: 600;
    background-clip: padding-box;
}

.fold {
    width: 14px;
    height: 14px;
    flex-shrink: 0;
}

.light { background-color: #d2d2d2; color: #1c1c1c; }
.blue { background-color: #5480e4; color: #0c1c48; }
.pink { background-color: #d12f70; color: #f4d5e0; border-left: none; }
.pink .fold { margin-right: 2px; }
.track.overview .name { border-left-color: #d2d2d2; }

.io {
    width: 79px;
    margin-left: 1px;
    padding: 2px 2px 0 2px;
    border-right: 2px solid #2c2c2c;
    border-left: 1px solid #2c2c2c;
    display: flex;
    flex-direction: column;
    gap: 4px;
}

.snap .name, .snap .io, .snap .mixer, .main .name, .main .io, .main .mixer {
    padding-top: 3px;
}

.box {
    height: 14px;
    background-color: #1c1c1c;
    border: 1px solid #141414;
    line-height: 12px;
    flex-shrink: 0;
}

select.box {
    width: 100%;
    padding: 0 0 0 2px;
    overflow: hidden;
    background-image: url('data:image/svg+xml,<svg xmlns="http://www.w3.org/2000/svg" width="9" height="8"><path d="M0 1h8L4 7z" fill="%23c8c8c8"/></svg>');
    background-repeat: no-repeat;
    background-position: right 0 center;
}

select.box.channel {
    padding-left: 9px;
    padding-right: 9px;
    background-color: #242424;
}

/* The two dashes at the left are the output level */
select.box.output {
    padding-left: 11px;
    background-color: #242424;
    background-image:
        url('data:image/svg+xml,<svg xmlns="http://www.w3.org/2000/svg" width="9" height="8"><path d="M0 1h8L4 7z" fill="%23c8c8c8"/></svg>'),
        url('data:image/svg+xml,<svg xmlns="http://www.w3.org/2000/svg" width="8" height="2"><path d="M1 0h2v1H1zM5 0h2v1H5z" fill="%232fd060"/></svg>');
    background-position: right 0 center, left 0 center;
}

.box.empty {
    background-color: transparent;
}

.monitor {
    display: flex;
    justify-content: space-between;
}

.monitor .box { padding: 0 3px; }
.monitor .on { padding: 0 1px; }

.mixer {
    width: 103px;
    padding: 2px 0 0 2px;
    display: flex;
    flex-wrap: wrap;
    align-content: flex-start;
    gap: 4px;
}

.mixer .box { width: 22px; }
.mixer .wide { width: 48px; }
.mixer .number { background-color: #7b7b7b; color: #1c1c1c; }
.mixer .solo { background-color: #3b6bbf; color: #0c1c38; }
.mixer .arm { background-color: #ff5a5f; }
.mixer .volume { background-image: linear-gradient(90deg, #03727e 80%, transparent 80%); }
.mixer .cue { background-image: linear-gradient(90deg, #3b6bbf 75%, transparent 75%); }

.dot {
    width: 8px;
    height: 8px;
    border-radius: 50%;
    background-color: #1c1c1c;
}

.dot.grey { background-color: #c0c0c0; }

.level {
    width: 9px;
    margin: 2px 0 2px 3px;
    display: flex;
    gap: 1px;
}

.level i {
    flex: 1;
    background-color: #1c1c1c;
}

.clip-level { margin-top: 0; }
.clip-level i { background-color: #1fe060; }
.sample .level i { background-image: linear-gradient(transparent 79%, #858585 79%); }
.main-level i { background-image: linear-gradient(transparent 5px, #2fd060 5px, #2fd060 6px, transparent 6px, transparent 10px, #2fd060 10px); }

.scrollbar {
    width: 9px;
    height: 244px;
    margin: 24px 0 0 2px;
    border-radius: 4px;
    background-color: #6c6c6c;
}

.track-foot {
    height: 23px;
    display: flex;
    gap: 3px;
    padding: 5px 0 0 1px;
}

.wave { width: 15px; }

.speed {
    width: 36px;
    background-image: linear-gradient(90deg, #03727e 11px, transparent 11px);
}

.track-foot .h { margin-left: 14px; }
.track-foot button:not(.wave) { width: 15px; }

/* Device chain */

.chain {
    display: flex;
    gap: 1px;
    padding: 7px 0 0 1px;
    margin-right: 11px;
    overflow: hidden;
    flex-shrink: 0;
}

.meter {
    width: 7px;
    height: 113px;
    margin-top: 42px;
    flex-shrink: 0;
    background-image:
        linear-gradient(90deg, transparent 3px, #292929 3px, #292929 4px, transparent 4px),
        linear-gradient(#181818 11px, #333 11px, #333 12px, #181818 12px, #181818 39px, #c8c832 39px, #c8c832 40px, #181818 40px, #181818 85px, #30d55a 85px);
}

.left-meter {
    background-image:
        linear-gradient(90deg, transparent 3px, #292929 3px, #292929 4px, transparent 4px),
        linear-gradient(#181818 11px, #333 11px, #333 12px, #181818 12px, #181818 35px, #c8c832 35px, #c8c832 36px, #181818 36px, #181818 80px, #30d55a 80px);
}

.device {
    height: 195px;
    flex-shrink: 0;
    background-color: #363636;
    border-radius: 4px;
    overflow: hidden;
}

.valhalla { width: 409px; }
.rack { width: 201px; display: flex; background-color: #484848; }
.delay { width: 384px; }
.proq { width: 247px; }

.device header {
    height: 18px;
    display: flex;
    align-items: center;
    gap: 3px;
    padding: 0 3px 0 4px;
    background-color: #474747;
}

.device header h2 {
    flex: 1;
    white-space: nowrap;
    padding-left: 1px;
}

.power {
    width: 12px;
    height: 12px;
    border-radius: 50%;
    background-color: #ffad56;
}

.chip {
    width: 14px;
    height: 14px;
    border-radius: 50%;
    background-color: #1c1c1c;
}

.chip.square { border-radius: 0; }
.chip.pale { background-color: #858585; }
.chip.lit { background-color: #ffad56; }

.body {
    height: 177px;
    padding: 4px 0 6px;
    display: flex;
}

.valhalla .body { padding-right: 3px; }

.col {
    flex: 1;
    min-width: 0;
    display: flex;
    flex-direction: column;
    align-items: center;
    justify-content: space-between;
}

.filter-col {
    flex: 0 0 62px;
    padding-left: 2px;
    border-right: 1px solid #222;
}

.stack {
    display: flex;
    flex-direction: column;
    align-items: center;
    gap: 2px;
}

.stack .box { height: 13px; }
.shapes { gap: 3px; }

.knob {
    position: relative;
    display: flex;
    flex-direction: column;
    align-items: center;
    white-space: nowrap;
}

.knob svg {
    width: 30px;
    height: 27px;
    fill: none;
    overflow: visible;
}

.knob.bipolar svg { height: 34px; }
.knob .track-arc { stroke: #171717; stroke-width: 2; }
.knob .value-arc { stroke: #1cc5d6; stroke-width: 2; }
.knob .pointer { stroke: #141414; stroke-width: 2; }
.knob .notch { fill: #1cc5d6; }
.knob.grey .value-arc { stroke: #858585; }
.knob.grey .track-arc { stroke: #292929; }
.knob.grey .pointer { stroke: #252525; }
.knob.faint .track-arc, .knob.faint .pointer { stroke: #252525; }
.knob.faint .value-arc { stroke: none; }
.knob.faint .notch { fill: #222; }

/* The range input sits invisibly over its dial */
.knob input {
    position: absolute;
    inset: 12px 0;
    width: 100%;
    opacity: 0;
}

.amount { height: 14px; }

.amount.mod {
    text-align: right;
    padding-right: 7px;
    background-image: url('data:image/svg+xml,<svg xmlns="http://www.w3.org/2000/svg" width="7" height="10"><path d="M7 0v10L0 5z" fill="%231cc5d6"/></svg>');
    background-repeat: no-repeat;
    background-position: right 0 center;
}

.amount.inactive, .offset {
    padding-right: 10px;
    background-color: #2c2c2c;
    background-image: url('data:image/svg+xml,<svg xmlns="http://www.w3.org/2000/svg" width="7" height="8"><path d="M7 0v8L0 4z" fill="%23777"/></svg>') !important;
    background-repeat: no-repeat;
    background-position: right 1px center;
}

/* Rack */

.rack-strip {
    width: 24px;
    display: flex;
    flex-direction: column;
    align-items: center;
    gap: 4px;
    padding: 3px 2px 4px 0;
    border-right: 1px solid #222;
    background-color: #414141;
}

.rack-strip .power { margin-bottom: 2px; }

.rack-strip h2 {
    flex: 1 1 0;
    min-height: 0;
    writing-mode: vertical-rl;
    transform: rotate(180deg);
    white-space: nowrap;
    font-size: 10px;
    font-weight: 600;
}

.rack-main {
    width: 157px;
    border-right: 1px solid #222;
    background-color: #363636;
}

.rack-end {
    flex: 1;
    background-image: linear-gradient(#474747 18px, #3d3d3d 18px);
}

.xy-wrap { padding: 8px 5px 0; }

.xy {
    width: 145px;
    height: 145px;
    background-color: #191919;
    display: flex;
    align-items: flex-end;
}

.ring {
    width: 14px;
    height: 14px;
    border: 2px solid #ffad56;
    border-radius: 50%;
}

.xy-selects {
    display: flex;
    gap: 4px;
    width: 145px;
    margin-top: 5px;
}

.xy-selects .box {
    flex: 1;
    justify-content: flex-start;
    padding-left: 2px;
}

/* Delay */

.delay .body { justify-content: space-between; padding: 4px 7px 5px 6px; }

.times {
    width: 121px;
    padding-top: 1px;
    display: flex;
    flex-direction: column;
    justify-content: space-between;
}

.channels {
    display: flex;
    justify-content: space-between;
}

.side {
    width: 49px;
    display: flex;
    flex-direction: column;
    align-items: center;
}

.side .box { width: 100%; }
.side .cyan { margin: 1px 0 2px; background-color: #0fbccc; color: #0c1c28; }
.side .offset { margin-top: 16px; }

.link-line {
    width: 18px;
    margin-top: 14px;
    display: flex;
    align-items: center;
    background: linear-gradient(90deg, transparent 8px, #222 8px, #222 9px, transparent 9px);
}

.link-line .box { width: 18px; height: 12px; }

.feedback {
    display: flex;
    align-items: center;
    justify-content: flex-end;
    gap: 6px;
}

.feedback .knob { width: 50px; margin-right: -12px; }
.dash { width: 11px; height: 1px; background-color: #222; }
.freeze { width: 24px; height: 15px; }

.display {
    width: 182px;
    background-color: #1a1a1a;
    color: #8e8e8e;
}

.display b, .display dd { color: #ffad56; }

.curve {
    width: 182px;
    height: 94px;
}

.readout {
    display: flex;
    align-items: center;
    gap: 5px;
    padding: 4px 9px 0 6px;
}

.readout label {
    display: flex;
    align-items: center;
    gap: 5px;
}

.readout input {
    width: 10px;
    height: 10px;
    background-color: #ffad56;
}

.rule {
    display: flex;
    align-items: center;
    gap: 5px;
    margin-top: 8px;
}

.rule::before, .rule::after {
    content: "";
    flex: 1;
    height: 1px;
    background-color: #3a3a3a;
}

.display dl {
    display: flex;
    padding: 2px 10px 0 9px;
}

.display dl div {
    flex: 1;
    text-align: center;
    display: flex;
    flex-direction: column;
    gap: 4px;
}

.modes {
    width: 57px;
    display: flex;
    flex-direction: column;
    gap: 2px;
    padding-top: 1px;
}

.modes .ping { margin: 17px 0 auto; }

/* Pro-Q */

.proq .body { padding-left: 5px; }

.sidechain {
    width: 76px;
    display: flex;
    flex-direction: column;
    gap: 1px;
}

.sidechain .empty { margin: 1px 0 5px; }
.sidechain .mute { margin-top: auto; color: #777; }

.splitter {
    width: 8px;
    display: flex;
    align-items: center;
    justify-content: flex-end;
    border-right: 1px solid #282828;
}

.splitter i {
    width: 3px;
    height: 8px;
    background-color: #222;
    clip-path: polygon(0 50%, 100% 0, 100% 100%);
}

.proq .xy-wrap { padding: 4px 0 0 7px; }

/* Status bar */

.status-bar {
    display: flex;
    align-items: center;
    height: 39px;
    padding: 0 0 1px 11px;
}

.info {
    width: 16px;
    height: 16px;
    border-radius: 50%;
    background-color: #555;
    color: #222;
    font-weight: 700;
}

.status-text, .status-clip {
    height: 20px;
    display: flex;
    align-items: center;
    background-color: #363636;
    border-radius: 3px;
}

.status-text {
    flex: 1;
    gap: 12px;
    margin: 0 10px 0 17px;
    padding-left: 6px;
}

.status-clip { width: 227px; margin-right: 9px; }

.status-clip .bare {
    width: 20px;
    height: 20px;
    border-right: 1px solid #222;
}

.status-up {
    width: 20px;
    height: 20px;
    margin-right: 269px;
    border-radius: 3px;
    background-color: #ffad56;
}

/* Second application window lying over the corner */
.mini-window {
    position: fixed;
    right: 13px;
    bottom: 0;
    width: 261px;
    height: 30px;
    display: flex;
    align-items: center;
    padding: 0 10px 2px 11px;
    background-color: #242424;
    border: 1px solid #444;
    border-bottom: none;
    border-radius: 5px 5px 0 0;
}

.mini-lights {
    display: flex;
    gap: 4px;
    margin-right: 55px;
}

.mini-lights i {
    width: 7px;
    height: 7px;
    border-radius: 50%;
    background-color: #484848;
}

.mini {
    min-width: 22px;
    height: 16px;
}

.mini.active { background-color: #2e2e2e; border-radius: 2px; }
```

FILE: script.js
```js
// Horizontal units of the timeline; bar 74 starts at 87.7, each bar is 92.3 wide
const WIDTH = 1120;
const BAR = 92.3;
const barX = bar => 87.7 + (bar - 74) * BAR;
const percent = x => `${(x / WIDTH * 100).toFixed(3)}%`;

const SELECTION = [28, 1103];

const clips = [
    [28, 99], [99, 123], [127, 173], [173, 310], [310, 375], [375, 401],
    [461, 734], [734, 914], [914, 978], [978, 995],
];

const fades = [[97, 2], [122, 2], [174, 5], [305, 4], [371, 4], [731, 3], [912, 2], [974, 4]];

// position, height above the centre line, height below it
const firstTake = `115,20,20 118,70,70 124,72,75 130,65,40 135,35,35 142,40,40 148,120,80 155,95,65 160,95,60 167,60,35
175,50,35 178,55,50 184,112,105 190,75,70 200,65,75 208,55,60 215,32,40 222,30,30 226,10,12 232,20,12 237,22,15 240,18,40
250,45,60 253,115,75 258,112,105 263,80,70 270,70,65 280,45,40 285,38,45 300,30,25 312,18,18 322,4,4 328,2,2 330,95,105
337,82,88 345,62,75 355,60,50 362,30,40 372,28,25 385,15,15 399,8,10 400,0,0 413,0,0 416,60,50 420,103,88 428,80,90
434,65,60 440,42,45 446,48,45 455,15,35 463,20,15 470,15,20 476,5,5 485,12,10 492,28,25 495,38,40 500,12,35 505,15,8
515,6,8 521,5,5 524,110,90 528,120,108 533,90,85 540,75,85 549,65,75 551,5,15 555,12,15 562,20,25 568,15,10 570,95,80
573,108,105 580,70,70 590,50,65 598,60,40 606,35,35 615,35,35 625,15,15 635,10,12 642,4,5 646,70,60 650,100,90 657,40,40
664,25,35 669,50,40 680,35,40 685,112,105 692,85,70 697,55,60 702,72,70 708,65,50 713,60,65 718,105,98 724,60,80
730,75,78 738,70,65 745,45,50 752,42,65 758,85,68 764,78,75 772,60,65 780,45,45 786,30,40 795,65,72 800,78,75 806,45,45
812,35,40 820,45,45 830,45,45 837,42,35 845,20,25 852,3,4 858,5,5 861,90,100 868,70,85 875,65,70 882,55,45 890,50,50
900,28,25 910,15,20 920,8,8 930,5,5 936,20,15 942,10,12 946,60,60 950,80,70 955,60,65 960,30,20 964,90,90 972,118,112
978,85,95 985,70,90 995,60,50 1002,65,55 1006,112,105 1012,85,80 1020,70,70 1030,45,65 1036,30,40 1045,65,40 1055,45,50
1062,55,55 1070,30,40 1078,100,95 1086,90,95 1097,80,65 1105,65,50 1115,42,45 1125,28,25 1132,18,20 1140,20,18 1150,5,6
1156,2,2 1160,70,60 1165,105,85 1172,75,88 1180,65,60 1190,50,50 1197,60,60 1202,105,95 1210,80,90 1218,70,70 1226,45,55
1232,10,10`;

const secondTake = `36,2,2 40,40,50 43,97,95 48,65,60 54,25,25 62,42,45 70,15,15 74,30,50 78,100,105 85,75,70 95,60,62
103,40,45 110,55,60 113,103,100 120,70,75 128,65,60 137,50,40 146,35,38 152,15,20 159,10,15 163,28,25 172,28,35 176,95,85
181,95,98 188,60,55 194,55,65 198,78,78 207,60,50 215,40,35 223,28,25 231,15,20 240,15,10 250,5,5 260,3,3 275,2,2
278,50,80 285,95,90 293,90,100 300,85,85 306,50,60 313,55,50 318,97,98 323,50,55 330,75,70 338,40,35 344,45,45 350,85,95
355,105,90 362,75,70 370,55,60 378,48,45 386,40,45 393,88,80 398,50,45 404,25,25 410,38,35 415,20,20 425,65,60 430,45,45
436,80,75 442,55,40 447,28,30 455,60,55 462,110,95 468,70,90 475,55,60 480,78,80 486,45,45 495,30,30 503,15,18 515,8,8
530,4,4 545,2,2 558,2,2 562,5,10 566,88,95 571,80,60 576,40,35 583,28,35 590,45,40 595,60,70 599,105,102 605,70,75
612,50,60 620,60,50 628,60,55 634,110,70 642,75,65 650,55,55 658,45,45 663,60,75 667,105,100 675,75,70 685,55,55
693,45,50 702,65,50 710,50,40 720,50,55 728,55,50 732,105,85 740,80,85 750,60,45 758,50,45 765,35,35 772,20,25 780,20,20
790,8,10 796,5,5 799,100,95 806,70,80 815,55,50 822,40,35 830,45,45 836,103,98 843,85,90 852,75,80 860,35,45 866,60,50
873,45,40 882,25,25 892,8,10 900,10,8 905,80,80 912,85,82 920,80,70 927,40,45 935,60,60 941,105,95 948,60,60 955,40,45
965,40,40 970,80,80 976,85,95 982,65,60 988,75,80 996,40,45 1003,60,60 1010,98,88 1017,70,75 1023,85,80 1030,40,50
1040,45,40 1048,60,45 1056,18,25 1064,25,20 1070,15,20 1075,45,45 1083,15,15 1092,20,15 1100,5,8 1110,15,15 1114,55,60
1118,95,125 1124,45,40 1130,35,40 1138,15,20 1147,18,12 1158,6,5 1170,2,2 1205,2,2 1210,70,85 1215,118,100 1222,95,110
1230,85,80 1238,50,60 1245,40,40 1254,90,80 1260,60,55 1267,80,75 1275,45,40 1282,50,60 1288,88,105 1295,85,60 1302,88,90
1308,85,110 1316,78,75 1325,80,80 1335,60,60 1343,95,98 1352,82,90 1360,60,60 1370,45,50 1378,25,30 1385,18,22 1395,15,15
1406,5,10 1412,98,88 1420,85,85 1428,75,80 1435,45,50 1443,40,45 1450,28,30 1460,18,18 1470,8,12 1480,8,8 1484,70,60
1488,105,98 1495,85,85 1503,85,90 1508,55,60 1516,50,55 1524,55,55 1526,0,0`;

function wavePath(data, scale, offset) {
    const points = data.split(/\s+/).map(point => point.split(',').map(Number));
    const centre = 185.5;
    const x = point => (point[0] / scale + offset).toFixed(1);
    const top = points.map(p => `${x(p)} ${(centre - p[1] / scale).toFixed(1)}`);
    const bottom = points.reverse().map(p => `${x(p)} ${(centre + p[2] / scale).toFixed(1)}`);
    return `M${top.concat(bottom).join('L')}Z`;
}

function gridSvg(from, to) {
    let out = '';
    for (let bar = 73; bar < 86; bar++) {
        const start = Math.max(barX(bar), from);
        const end = Math.min(barX(bar + 1), to);
        if (end > start) {
            out += `<rect class="${bar % 2 ? 'odd' : 'even'}" x="${start}" width="${end - start}" height="100"/>`;
        }
    }
    for (let beat = 73 * 4; beat <= 85 * 4; beat++) {
        const x = Math.floor(barX(beat / 4)) + 0.5;
        if (x > from && x < to) {
            out += `<line x1="${x}" x2="${x}" y1="0" y2="100"/>`;
        }
    }
    return `<svg viewBox="0 0 ${WIDTH} 100" preserveAspectRatio="none" shape-rendering="crispEdges">${out}</svg>`;
}

function drawTimeline() {
    document.querySelectorAll('.grid').forEach(grid => {
        grid.innerHTML = gridSvg(0, WIDTH);
    });
    document.querySelector('.selection').innerHTML = gridSvg(...SELECTION);

    let bars = '';
    for (let beat = 73 * 4 + 1; beat <= 85 * 4; beat++) {
        const left = percent(Math.floor(barX(beat / 4)));
        bars += `<i class="${beat % 4 ? 'minor' : ''}" style="left:${left}"></i>`;
        if (beat % 4 === 0 && beat < 85 * 4) {
            bars += `<span style="left:${left}">${beat / 4}</span>`;
        }
    }
    bars += `<i class="marker" style="left:${percent(24)}"></i><i class="marker end" style="left:${percent(1103)}"></i>`;
    document.querySelector('.bar-ruler .labels').innerHTML = bars;

    let times = '';
    for (let i = -1; i < 48; i++) {
        const left = percent(41 + i * 22.32);
        times += `<i class="${i % 4 ? 'minor' : ''}" style="left:${left}"></i>`;
        if (i % 4 === 0) {
            times += `<span style="left:${left}">2:${30 + i / 2}</span>`;
        }
    }
    times += `<i class="marker" style="left:${percent(25)}"></i><i class="marker end" style="left:${percent(1103)}"></i>`;
    document.querySelector('.time-ruler .labels').innerHTML = times;

    const lane = document.querySelector('.clips');
    lane.innerHTML = clips.map(([start, end]) =>
        `<div class="clip" style="left:${percent(start)};width:${percent(end - start)}"><span class="clip-title">Reske 2</span></div>`
    ).join('') + fades.map(([start, width]) =>
        `<i class="fade" style="left:${percent(start)};width:${percent(width)}"></i>`
    ).join('') +
        `<i class="handle top" style="left:${percent(461)}"></i>` +
        `<i class="handle top" style="left:${percent(728)}"></i>` +
        `<i class="handle bottom" style="left:${percent(461)}"></i>`;

    document.querySelector('.waveform path').setAttribute('d',
        wavePath(firstTake, 3, -10) + wavePath(secondTake, 2.8, 450));
}

// Dials sweep 300 degrees, open at the bottom
function drawKnob(knob) {
    const input = knob.querySelector('input');
    const bipolar = knob.classList.contains('bipolar');
    const cy = bipolar ? 22 : 15;
    const point = (deg, r) => {
        const a = deg * Math.PI / 180;
        return `${(15 + r * Math.sin(a)).toFixed(2)} ${(cy - r * Math.cos(a)).toFixed(2)}`;
    };
    const arc = (from, to) => `M${point(from, 12.5)}A12.5 12.5 0 ${to - from > 180 ? 1 : 0} 1 ${point(to, 12.5)}`;
    const angle = -150 + input.value * 3;
    const zero = bipolar ? 0 : -150;
    knob.querySelector('svg').innerHTML =
        `<path class="track-arc" d="${arc(-150, 150)}"/>` +
        `<path class="value-arc" d="${arc(Math.min(zero, angle), Math.max(zero, angle))}"/>` +
        `<path class="pointer" d="M${point(angle, 0)}L${point(angle, 12)}"/>` +
        (bipolar ? '<path class="notch" d="M11 3h8l-4 5z"/>' : '');
}

drawTimeline();
document.querySelectorAll('.knob').forEach(knob => {
    const input = knob.querySelector('input');
    input.before(document.createElementNS('http://www.w3.org/2000/svg', 'svg'));
    input.addEventListener('input', () => drawKnob(knob));
    drawKnob(knob);
});
```
